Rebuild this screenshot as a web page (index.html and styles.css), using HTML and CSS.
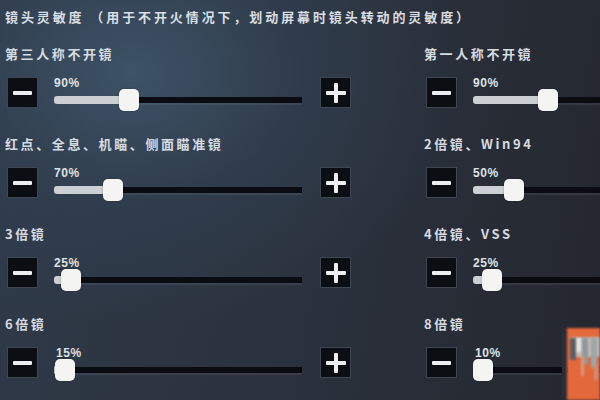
FILE: index.html
```html
<!DOCTYPE html>
<html lang="zh-CN">
<head>
<meta charset="utf-8">
<title>镜头灵敏度</title>
<link rel="stylesheet" href="styles.css">
</head>
<body>
<main class="screen">
  <h1 class="title">镜头灵敏度 （用于不开火情况下，划动屏幕时镜头转动的灵敏度）</h1>

  <div class="grid">
    <section class="setting">
      <div class="label">第三人称不开镜</div>
      <div class="controls">
        <button class="btn minus" aria-label="减少"></button>
        <div class="slider">
          <span class="pct">90%</span>
          <div class="track"><i class="fill" style="width:65px"></i><i class="thumb"></i><i class="rest"></i></div>
        </div>
        <button class="btn plus" aria-label="增加"></button>
      </div>
    </section>

    <section class="setting">
      <div class="label">第一人称不开镜</div>
      <div class="controls">
        <button class="btn minus" aria-label="减少"></button>
        <div class="slider">
          <span class="pct">90%</span>
          <div class="track"><i class="fill" style="width:65px"></i><i class="thumb"></i><i class="rest"></i></div>
        </div>
        <button class="btn plus" aria-label="增加"></button>
      </div>
    </section>

    <section class="setting">
      <div class="label">红点、全息、机瞄、侧面瞄准镜</div>
      <div class="controls">
        <button class="btn minus" aria-label="减少"></button>
        <div class="slider">
          <span class="pct">70%</span>
          <div class="track"><i class="fill" style="width:49px"></i><i class="thumb"></i><i class="rest"></i></div>
        </div>
        <button class="btn plus" aria-label="增加"></button>
      </div>
    </section>

    <section class="setting">
      <div class="label">2倍镜、Win94</div>
      <div class="controls">
        <button class="btn minus" aria-label="减少"></button>
        <div class="slider">
          <span class="pct">50%</span>
          <div class="track"><i class="fill" style="width:31px"></i><i class="thumb"></i><i class="rest"></i></div>
        </div>
        <button class="btn plus" aria-label="增加"></button>
      </div>
    </section>

    <section class="setting">
      <div class="label">3倍镜</div>
      <div class="controls">
        <button class="btn minus" aria-label="减少"></button>
        <div class="slider">
          <span class="pct">25%</span>
          <div class="track"><i class="fill" style="width:7px"></i><i class="thumb"></i><i class="rest"></i></div>
        </div>
        <button class="btn plus" aria-label="增加"></button>
      </div>
    </section>

    <section class="setting">
      <div class="label">4倍镜、VSS</div>
      <div class="controls">
        <button class="btn minus" aria-label="减少"></button>
        <div class="slider">
          <span class="pct">25%</span>
          <div class="track"><i class="fill" style="width:9px"></i><i class="thumb"></i><i class="rest"></i></div>
        </div>
        <button class="btn plus" aria-label="增加"></button>
      </div>
    </section>

    <section class="setting">
      <div class="label">6倍镜</div>
      <div class="controls">
        <button class="btn minus" aria-label="减少"></button>
        <div class="slider">
          <span class="pct pct-in">15%</span>
          <div class="track"><i class="fill" style="width:1px"></i><i class="thumb"></i><i class="rest"></i></div>
        </div>
        <button class="btn plus" aria-label="增加"></button>
      </div>
    </section>

    <section class="setting">
      <div class="label">8倍镜</div>
      <div class="controls">
        <button class="btn minus" aria-label="减少"></button>
        <div class="slider">
          <span class="pct pct-in">10%</span>
          <div class="track"><i class="fill" style="width:0px"></i><i class="thumb"></i><i class="rest"></i></div>
        </div>
        <button class="btn plus" aria-label="增加"></button>
      </div>
    </section>
  </div>

  <!-- corner thumbnail sitting over the last slider -->
  <div class="corner-badge">
    <svg width="33" height="72" viewBox="0 0 33 72" aria-hidden="true">
      <rect width="33" height="72" fill="#e3683b"/>
      <rect x="3" y="9" width="30" height="20" fill="#c9b7ae"/>
      <rect x="3" y="10" width="6" height="22" fill="#5b5f66"/>
      <rect x="9" y="10" width="5" height="14" fill="#e8e4e0"/>
      <rect x="15" y="10" width="6" height="26" fill="#8c9aa0"/>
      <rect x="24" y="10" width="6" height="30" fill="#9aa7ab"/>
      <rect x="14" y="28" width="3" height="20" fill="#d99a80"/>
      <rect x="27" y="36" width="4" height="16" fill="#cf8e77"/>
    </svg>
  </div>
</main>
</body>
</html>
```

FILE: styles.css
```css
html, body {
  margin: 0;
  padding: 0;
}

body {
  width: 600px;
  height: 400px;
  overflow: hidden;
  background: #292d36;
}

.screen {
  position: relative;
  width: 600px;
  height: 400px;
  box-sizing: border-box;
  padding: 9px 0 0 5px;
  overflow: hidden;
  background:
    radial-gradient(ellipse 70% 80% at 22% 18%, rgba(62, 84, 104, 0.95) 0%, rgba(50, 66, 84, 0.6) 40%, rgba(41, 45, 54, 0) 80%),
    linear-gradient(100deg, #2f3a49 0%, #2b313c 55%, #24272f 100%);
  color: #dde1e5;
  font-family: "Noto Sans CJK SC", "Noto Sans", sans-serif;
}

.title {
  margin: 0;
  font-size: 13px;
  line-height: 16px;
  font-weight: 700;
  letter-spacing: 2.9px;
  white-space: nowrap;
  color: #d9dee3;
}

.grid {
  display: grid;
  grid-template-columns: 419px 1fr;
  row-gap: 25px;
  margin-top: 21px;
}

.setting {
  min-width: 0;
}

.label {
  font-size: 13px;
  line-height: 16px;
  font-weight: 700;
  letter-spacing: 2.6px;
  white-space: nowrap;
  color: #d6dbe0;
}

.controls {
  display: flex;
  align-items: flex-start;
  gap: 16px;
  margin-top: 15px;
  padding-left: 2px;
}

.btn {
  flex: none;
  display: grid;
  place-items: center;
  width: 31px;
  height: 31px;
  padding: 0;
  margin: 0;
  background: #0b0e13;
  border: 1px solid #3d4651;
  box-sizing: border-box;
  cursor: pointer;
}

.btn::before,
.btn::after {
  grid-area: 1 / 1;
  content: "";
  background: #eceeef;
  border-radius: 1px;
}

.btn::before {
  width: 19px;
  height: 4px;
}

.btn.minus::after {
  display: none;
}

.btn.plus::after {
  width: 4px;
  height: 20px;
}

.btn.plus::before {
  width: 20px;
}

.slider {
  flex: none;
  width: 248px;
}

.slider + .btn {
  margin-left: 2px;
}

.pct {
  display: block;
  height: 12px;
  font-family: "Liberation Sans", "Noto Sans", sans-serif;
  font-size: 12px;
  line-height: 12px;
  font-weight: 700;
  letter-spacing: 0.6px;
  color: #dfe2e5;
}

.pct-in {
  padding-left: 2px;
}

.track {
  display: flex;
  align-items: center;
  height: 22px;
}

.track i {
  display: block;
  flex: none;
}

.fill {
  height: 8px;
  background: #ccd0d4;
  border-radius: 3px 0 0 3px;
}

.thumb {
  width: 20px;
  height: 22px;
  background: #f4f4f3;
  border-radius: 5px;
  box-shadow: 0 0 2px rgba(0, 0, 0, 0.35);
}

.track .rest {
  flex: 1;
  height: 6px;
  background: #0a0c11;
  box-shadow: 0 2px 0 rgba(120, 130, 140, 0.18);
}

.corner-badge {
  position: absolute;
  left: 567px;
  top: 328px;
  width: 33px;
  height: 72px;
  box-shadow: -5px 0 0 #2a2d35;
}

.corner-badge svg {
  display: block;
  filter: blur(1.2px);
}
```
